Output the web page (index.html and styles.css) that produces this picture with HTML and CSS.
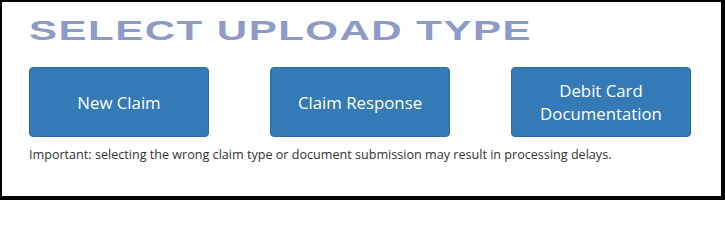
FILE: index.html
```html
<!DOCTYPE html>
<html>
<head>
<meta charset="utf-8">
<link rel="stylesheet" href="styles.css">
</head>
<body>
<div class="panel">
  <h1 class="title"><span class="title-text">SELECT UPLOAD TYPE</span></h1>
  <div class="buttons">
    <button class="btn">New Claim</button>
    <button class="btn">Claim Response</button>
    <button class="btn">Debit Card<br>Documentation</button>
  </div>
  <p class="note">Important: selecting the wrong claim type or document submission may result in processing delays.</p>
</div>
</body>
</html>
```
FILE: styles.css
```css
html, body {
  margin: 0;
  padding: 0;
  background: #fff;
}
.panel {
  box-sizing: border-box;
  width: 725px;
  height: 200px;
  border-style: solid;
  border-color: #000;
  border-width: 2px 4px 4px 2px;
  padding: 15px 0 0 27px;
  font-family: "Open Sans", "Liberation Sans", sans-serif;
}
.title {
  margin: 0;
  height: 50px;
  font-family: "Liberation Sans", Arial, sans-serif;
  font-weight: 700;
  font-size: 28px;
  line-height: 28px;
  color: #8d9cc6;
  white-space: nowrap;
}
.title-text {
  display: inline-block;
  transform: scaleX(1.5);
  transform-origin: left center;
  letter-spacing: 1px;
}
.buttons {
  display: flex;
  gap: 61px;
}
.btn {
  box-sizing: border-box;
  width: 180px;
  height: 70px;
  background: #337ab7;
  border: 1px solid #2e6da4;
  border-radius: 4px;
  color: #fff;
  font-family: "Open Sans", sans-serif;
  font-size: 16.8px;
  line-height: 23px;
  padding: 0;
}
.note {
  margin: 9px 0 0;
  font-size: 12.6px;
  line-height: 17px;
  color: #333;
}
```
